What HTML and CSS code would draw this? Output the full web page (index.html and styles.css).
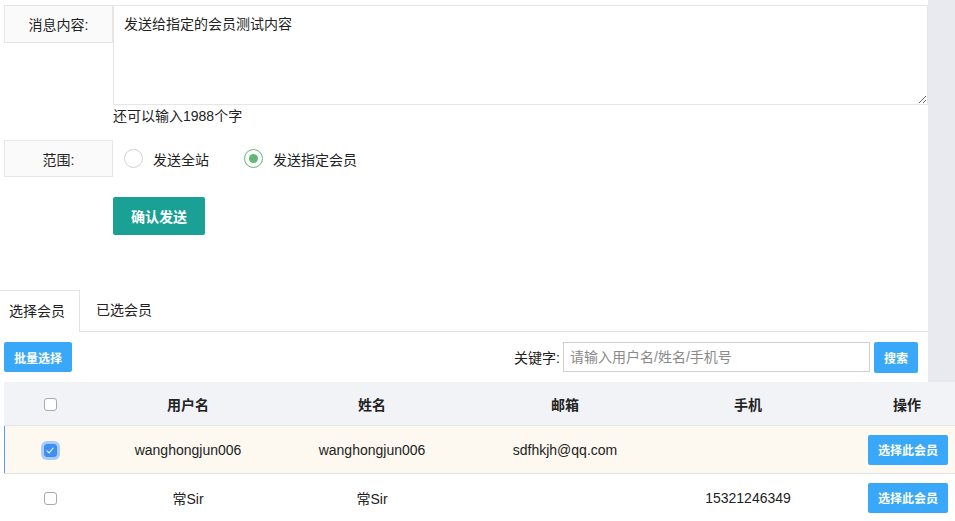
FILE: index.html
```html
<!DOCTYPE html>
<html lang="zh-CN">
<head>
    <meta charset="UTF-8">
    <title>发送消息</title>
    <link rel="stylesheet" href="styles.css">
</head>
<body>
    <div class="top">
        <div class="main">
            <div class="form-row">
                <div class="form-label">消息内容:</div>
                <div class="form-field">
                    <textarea class="msg-input">发送给指定的会员测试内容</textarea>
                    <div class="counter">还可以输入1988个字</div>
                </div>
            </div>
            <div class="form-row range-row">
                <div class="form-label">范围:</div>
                <div class="radios">
                    <label class="radio"><span class="radio-dot"></span>发送全站</label>
                    <label class="radio checked"><span class="radio-dot"></span>发送指定会员</label>
                </div>
            </div>
            <div class="submit-row">
                <button class="btn-send">确认发送</button>
            </div>

            <ul class="tabs">
                <li class="tab active">选择会员</li>
                <li class="tab">已选会员</li>
            </ul>

            <div class="toolbar">
                <button class="btn-blue">批量选择</button>
                <div class="search">
                    <span class="search-label">关键字:</span>
                    <input type="text" class="search-input" placeholder="请输入用户名/姓名/手机号">
                    <button class="btn-blue btn-search">搜索</button>
                </div>
            </div>
        </div>
        <div class="side"></div>
    </div>

    <table class="members">
        <colgroup>
            <col style="width:92px">
            <col style="width:184px">
            <col style="width:184px">
            <col style="width:202px">
            <col style="width:164px">
            <col style="width:154px">
        </colgroup>
        <thead>
            <tr>
                <th><span class="check"></span></th>
                <th>用户名</th>
                <th>姓名</th>
                <th>邮箱</th>
                <th>手机</th>
                <th>操作</th>
            </tr>
        </thead>
        <tbody>
            <tr class="selected">
                <td><span class="check on"></span></td>
                <td>wanghongjun006</td>
                <td>wanghongjun006</td>
                <td>sdfhkjh@qq.com</td>
                <td></td>
                <td><button class="btn-blue btn-pick">选择此会员</button></td>
            </tr>
            <tr>
                <td><span class="check"></span></td>
                <td>常Sir</td>
                <td>常Sir</td>
                <td></td>
                <td>15321246349</td>
                <td><button class="btn-blue btn-pick">选择此会员</button></td>
            </tr>
        </tbody>
    </table>
</body>
</html>
```

FILE: styles.css
```css
html, body {
    margin: 0;
    padding: 0;
    overflow: hidden;
}
body {
    font-family: "Liberation Sans", "Noto Sans CJK SC", sans-serif;
    font-size: 14px;
    color: #222;
    background-color: #fff;
}
.top {
    display: flex;
}
.main {
    width: 928px;
    flex-shrink: 0;
}
.side {
    flex: 1;
    background-color: #e9eaf0;
}
.form-row {
    display: flex;
    padding-left: 4px;
    padding-top: 5px;
}
.form-label {
    width: 109px;
    height: 38px;
    box-sizing: border-box;
    border: 1px solid #e6e6e6;
    background-color: #fafafa;
    display: flex;
    align-items: center;
    justify-content: center;
    flex-shrink: 0;
}
.form-field {
    flex: 1;
}
.msg-input {
    display: block;
    width: 815px;
    height: 100px;
    box-sizing: border-box;
    border: 1px solid #e6e6e6;
    padding: 7px 10px;
    font-family: inherit;
    font-size: 14px;
    color: #222;
    resize: vertical;
    outline: none;
}
.counter {
    line-height: 20px;
    margin-top: 1px;
}
.range-row {
    padding-top: 14px;
}
.range-row .form-label {
    height: 37px;
}
.radios {
    display: flex;
    align-items: center;
    padding-left: 11px;
}
.radio {
    display: flex;
    align-items: center;
    margin-right: 35px;
}
.radio-dot {
    width: 19px;
    height: 19px;
    box-sizing: border-box;
    border: 1px solid #d2d2d2;
    border-radius: 50%;
    margin-right: 10px;
    display: flex;
    align-items: center;
    justify-content: center;
}
.radio.checked .radio-dot {
    border-color: #5fb878;
}
.radio.checked .radio-dot::after {
    content: "";
    width: 9px;
    height: 9px;
    border-radius: 50%;
    background-color: #5fb878;
}
.submit-row {
    padding: 20px 0 0 113px;
}
.btn-send {
    width: 92px;
    height: 38px;
    border: none;
    border-radius: 2px;
    background-color: #1aa094;
    color: #fff;
    font-family: inherit;
    font-size: 14px;
    font-weight: bold;
}
.tabs {
    list-style: none;
    margin: 55px 0 0 0;
    padding: 0;
    display: flex;
    border-bottom: 1px solid #e2e2e2;
    height: 41px;
}
.tab {
    height: 41px;
    line-height: 41px;
    padding: 0 16px;
    box-sizing: border-box;
}
.tab.active {
    padding: 0 14px 0 9px;
    height: 42px;
    border-top: 1px solid #e2e2e2;
    border-right: 1px solid #e2e2e2;
    background-color: #fff;
    line-height: 40px;
}
.toolbar {
    height: 50px;
    display: flex;
    align-items: center;
    justify-content: space-between;
    padding: 0 10px 0 4px;
}
.btn-blue {
    border: none;
    border-radius: 2px;
    background-color: #3aa8f8;
    color: #fff;
    font-family: inherit;
    font-size: 12px;
    font-weight: bold;
    height: 30px;
    padding: 0 10px;
}
.search {
    display: flex;
    align-items: center;
}
.search-label {
    margin-right: 3px;
}
.search-input {
    width: 307px;
    height: 30px;
    box-sizing: border-box;
    border: 1px solid #d0d0d0;
    padding: 0 6px;
    font-family: inherit;
    font-size: 14px;
    outline: none;
}
.search-input::placeholder {
    color: #8a8a8a;
}
.btn-search {
    margin-left: 4px;
    width: 44px;
    height: 31px;
    padding: 0;
}
.members {
    margin-left: 4px;
    width: 980px;
    table-layout: fixed;
    border-collapse: collapse;
}
.members th {
    height: 43px;
    background-color: #f2f3f7;
    border-bottom: 1px solid #e6e6e6;
    font-weight: bold;
    text-align: center;
    padding: 0;
}
.members td {
    height: 47px;
    border-bottom: 1px solid #e2e2e2;
    text-align: center;
    padding: 0;
}
.members tr.selected td {
    background-color: #fdf9f1;
}
.members tr.selected td:first-child {
    box-shadow: inset 1px 0 0 #5a9de6;
}
.check {
    display: inline-block;
    width: 13px;
    height: 13px;
    box-sizing: border-box;
    border: 1px solid #a9a9a9;
    border-radius: 3px;
    background-color: #fff;
    vertical-align: middle;
    position: relative;
}
.check.on {
    border-color: #3b8cf2;
    background-color: #3f90f6;
    box-shadow: 0 0 0 3px #a8cbf8;
}
.check.on::after {
    content: "";
    position: absolute;
    left: 3px;
    top: 1px;
    width: 3px;
    height: 6px;
    border-right: 1.5px solid #fff;
    border-bottom: 1.5px solid #fff;
    transform: rotate(40deg);
}
.btn-pick {
    width: 80px;
    margin-left: 2px;
    padding: 0;
}
```
